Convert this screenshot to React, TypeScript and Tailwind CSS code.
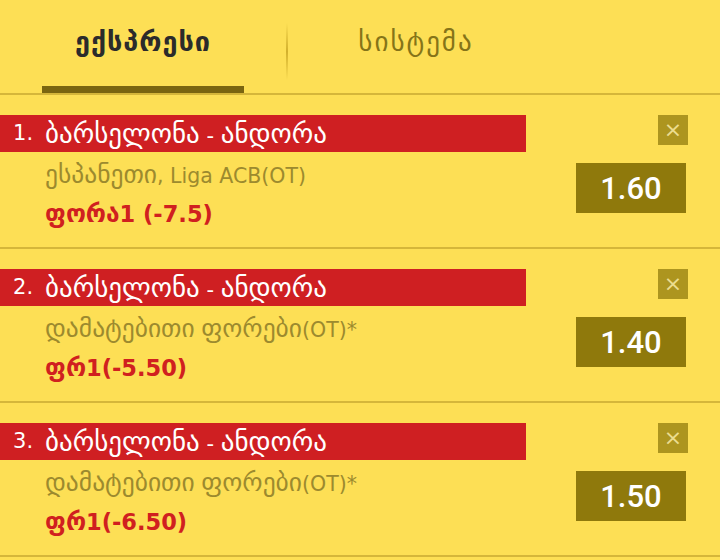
import React from "react";

type Bet = { n: number; title: string; sub: string; pick: string; odds: string };

const bets: Bet[] = [
  { n: 1, title: "ბარსელონა - ანდორა", sub: "ესპანეთი, Liga ACB(OT)", pick: "ფორა1 (-7.5)", odds: "1.60" },
  { n: 2, title: "ბარსელონა - ანდორა", sub: "დამატებითი ფორები(OT)*", pick: "ფრ1(-5.50)", odds: "1.40" },
  { n: 3, title: "ბარსელონა - ანდორა", sub: "დამატებითი ფორები(OT)*", pick: "ფრ1(-6.50)", odds: "1.50" },
];

function Mixed({ text, geo }: { text: string; geo: string }) {
  const parts = text.split(/([\u10A0-\u10FF]+)/).filter((p) => p.length > 0);
  return (
    <>
      {parts.map((p, i) =>
        /[\u10A0-\u10FF]/.test(p) ? (
          <span key={i} className={geo}>
            {p}
          </span>
        ) : (
          <span key={i}>{p}</span>
        )
      )}
    </>
  );
}

function Row({ b }: { b: Bet }) {
  return (
    <div className="h-[154px] border-b-2 border-[#d5b63a] flex">
      <div className="flex-1 flex flex-col pt-[20px]">
        <div className="w-[526px] h-[37px] bg-[#cf1f22] flex items-center text-white text-[21px] leading-none pl-[13px]">
          <span className="w-[32px]">{b.n}.</span>
          <span>
            <Mixed text={b.title} geo="text-[27px]" />
          </span>
        </div>
        <div className="pl-[45px] mt-[9px] h-[28px] flex items-center text-[20.5px] leading-none text-[#9c8a2e]">
          <span>
            <Mixed text={b.sub} geo="text-[25.5px]" />
          </span>
        </div>
        <div className="pl-[45px] mt-[10px] h-[30px] flex items-center text-[22.5px] leading-none font-bold text-[#d0201f]">
          <span>
            <Mixed text={b.pick} geo="text-[24.5px]" />
          </span>
        </div>
      </div>
      <div className="w-[194px] flex flex-col items-end pr-[32px] pt-[20px]">
        <div className="w-[30px] h-[30px] bg-[#ad951f] flex items-center justify-center text-[#ecdd8f] text-[22px] leading-none">
          ×
        </div>
        <div
          className="mt-[18px] mr-[2px] w-[110px] h-[50px] bg-[#8f790c] text-white flex items-center justify-center text-[31px] font-medium leading-none"
          style={{ fontFamily: "Roboto, sans-serif" }}
        >
          {b.odds}
        </div>
      </div>
    </div>
  );
}

export default function App() {
  return (
    <div
      className="w-[720px] h-[560px] bg-[#fddf55] overflow-hidden"
      style={{ fontFamily: "'DejaVu Sans', sans-serif" }}
    >
      <div className="h-[95px] border-b-2 border-[#d5b63a] flex">
        <div className="ml-[42px] w-[202px] h-[93px] -mb-[2px] border-b-[7px] border-[#7a6510] flex items-center justify-center pb-[2px] text-[27px] tracking-[1px] text-[#2b2b2b] font-bold">
          ექსპრესი
        </div>
        <div className="ml-[42px] w-[2px] mt-[23px] h-[57px] bg-gradient-to-b from-transparent via-[#d2b02c] to-transparent" />
        <div className="w-[256px] flex items-center justify-center pb-[8px] text-[27px] tracking-[2px] text-[#857418]">
          სისტემა
        </div>
      </div>
      {bets.map((b) => (
        <Row key={b.n} b={b} />
      ))}
    </div>
  );
}
